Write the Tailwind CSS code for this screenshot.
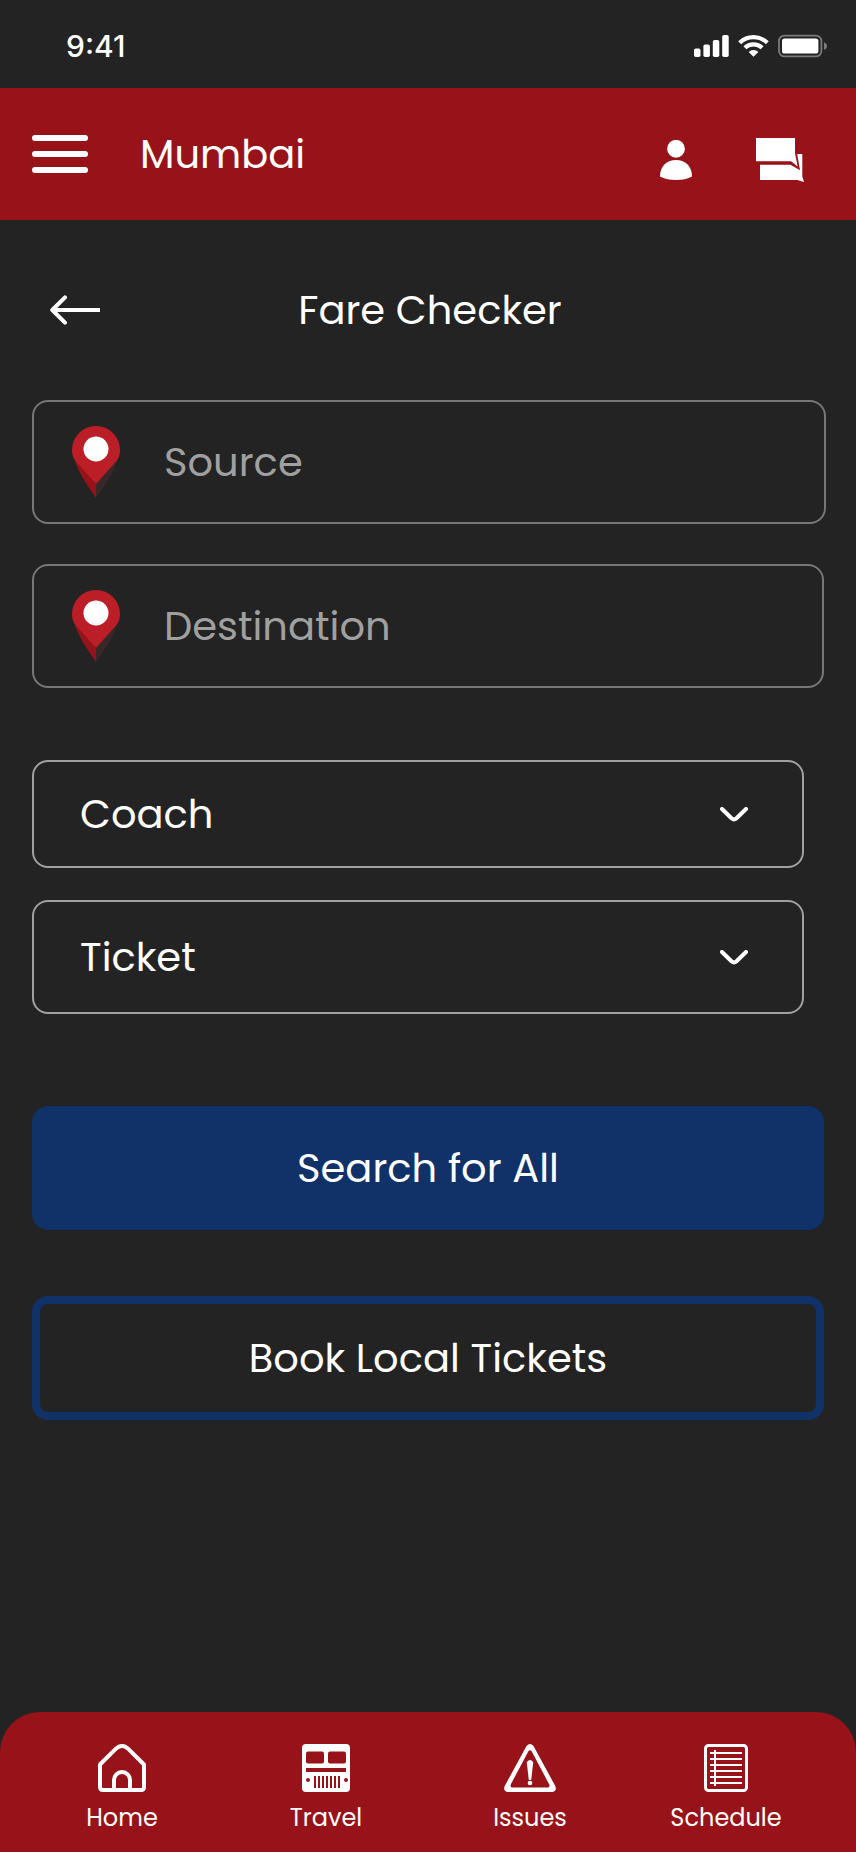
<!DOCTYPE html>
<html lang="en">
<head>
<meta charset="utf-8">
<meta name="viewport" content="width=device-width, initial-scale=1">
<title>Fare Checker</title>
<script src="https://cdn.jsdelivr.net/npm/@tailwindcss/browser@4"></script>
</head>
<body class="flex min-h-screen flex-col bg-[#232323] font-[Poppins,Inter,sans-serif] text-[40px] leading-[60px] text-white">

  <!-- Status bar -->
  <div class="flex h-[88px] items-center justify-between pl-[66px] pr-7 pt-1">
    <time class="font-[Inter,sans-serif] text-[30px] font-medium leading-9">9:41</time>
    <div class="flex items-center gap-[9px]">
      <svg class="h-6 w-[35px]" viewBox="0 0 35 24" fill="#fff" aria-label="Signal">
        <rect x="0" y="14.5" width="6.5" height="8.5" rx="1.8"/><rect x="9.4" y="10.5" width="6.5" height="12.5" rx="1.8"/><rect x="18.8" y="6" width="6.5" height="17" rx="1.8"/><rect x="28.2" y="1" width="6.5" height="22" rx="1.8"/>
      </svg>
      <svg class="h-6 w-[31px]" viewBox="0 0 31 24" aria-label="Wi-Fi">
        <g fill="none" stroke="#fff" stroke-width="4.2"><path d="M1.7 8.8a19.6 19.6 0 0 1 27.6 0"/><path d="M6.9 13.8a12.3 12.3 0 0 1 17.2 0"/></g>
        <path d="M15.5 22.8 10.6 18a7 7 0 0 1 9.8 0Z" fill="#fff"/>
      </svg>
      <svg class="h-6 w-[50px]" viewBox="0 0 50 24" aria-label="Battery">
        <rect x="1" y="1.6" width="42.4" height="20.8" rx="5.5" fill="none" stroke="#7b7b7b" stroke-width="1.8"/>
        <rect x="4" y="4.4" width="36.4" height="15.2" rx="2.6" fill="#fff"/>
        <path d="M46 8.2c4 1.5 4 6.100 0 7.600Z" fill="#7b7b7b"/>
      </svg>
    </div>
  </div>

  <!-- App bar -->
  <header class="flex h-[132px] items-center bg-[#981319] pl-8 pr-[52px]">
    <button type="button" aria-label="Menu" class="mr-[52px]">
      <svg class="h-[38px] w-14" viewBox="0 0 56 38" fill="#fff"><rect width="56" height="6" rx="3"/><rect y="16" width="56" height="6" rx="3"/><rect y="32" width="56" height="6" rx="3"/></svg>
    </button>
    <span class="flex-1">Mumbai</span>
    <div class="flex items-center gap-16 pt-3">
      <button type="button" aria-label="Profile">
        <svg class="h-10 w-8" viewBox="0 0 32 40" fill="#fff"><circle cx="16" cy="8.800" r="8.900"/><path d="M0 36.500C0 26 7 20 16 20s16 6 16 16.500C28 39 22 40 16 40S4 39 0 36.500Z"/></svg>
      </button>
      <button type="button" aria-label="Messages">
        <svg class="h-11 w-12" viewBox="0 0 48 44" fill="#fff"><path d="M0 0h39v15.300l2.700 13.200-6.700-5.300H0Z"/><path d="M4 26.700h30.500L44 32.200 41.200 16h5.100v22.500L48 44l-6.700-2H4Z"/></svg>
      </button>
    </div>
  </header>

  <main class="flex-1 px-8 pt-[60px]">
    <div class="grid grid-cols-[68px_1fr_64px] items-center">
      <button type="button" aria-label="Back" class="pl-[18px]">
        <svg class="h-[30px] w-[50px]" viewBox="0 0 50 30" fill="none" stroke="#fff" stroke-width="4" stroke-linejoin="round"><path d="M2.500 15H50"/><path d="M15 2.300 2.300 15 15 27.700" stroke-linecap="round"/></svg>
      </button>
      <h1 class="text-center">Fare Checker</h1>
    </div>

    <form>
      <div class="-mr-0.5 mt-[60px] flex h-[124px] items-center rounded-2xl border-2 border-[#777777] pl-[38px]">
        <label for="source" aria-label="Source">
          <svg class="h-[72px] w-12" viewBox="0 0 48 72"><path d="M24 58 46 32C42 46 33 59 24 72Z" fill="#382829"/><path d="M24 58 2 32C6 46 15 59 24 72Z" fill="#981319"/><path d="M24 0A24 24 0 0 1 48 24C48 28 47 32 44.500 35L24 58 3.500 35C1 32 0 28 0 24A24 24 0 0 1 24 0Z" fill="#bb1e26"/><circle cx="24" cy="23" r="12.500" fill="#fff"/></svg>
        </label>
        <input id="source" type="text" placeholder="Source" class="ml-11 min-w-0 flex-1 bg-transparent outline-none placeholder:text-[#a0a0a0]">
      </div>
      <div class="mt-10 flex h-[124px] items-center rounded-2xl border-2 border-[#777777] pl-[38px]">
        <label for="destination" aria-label="Destination">
          <svg class="h-[72px] w-12" viewBox="0 0 48 72"><path d="M24 58 46 32C42 46 33 59 24 72Z" fill="#382829"/><path d="M24 58 2 32C6 46 15 59 24 72Z" fill="#981319"/><path d="M24 0A24 24 0 0 1 48 24C48 28 47 32 44.500 35L24 58 3.500 35C1 32 0 28 0 24A24 24 0 0 1 24 0Z" fill="#bb1e26"/><circle cx="24" cy="23" r="12.500" fill="#fff"/></svg>
        </label>
        <input id="destination" type="text" placeholder="Destination" class="ml-11 min-w-0 flex-1 bg-transparent outline-none placeholder:text-[#a0a0a0]">
      </div>

      <div class="mr-5 mt-[72px] grid items-center">
        <select aria-label="Coach" class="col-start-1 row-start-1 h-[108px] w-full appearance-none rounded-2xl border-2 border-[#a0a0a0] bg-transparent pl-[46px] pr-24"><option>Coach</option></select>
        <svg class="pointer-events-none col-start-1 row-start-1 mr-14 h-[15px] w-7 justify-self-end" viewBox="0 0 28 15" fill="none" stroke="#fff" stroke-width="4" stroke-linecap="round" stroke-linejoin="round"><path d="m2 2 9.500 9.200q2.500 2.200 5 0L26 2"/></svg>
      </div>
      <div class="mr-5 mt-8 grid items-center">
        <select aria-label="Ticket" class="col-start-1 row-start-1 h-[114px] w-full appearance-none rounded-2xl border-2 border-[#a0a0a0] bg-transparent pl-[46px] pr-24"><option>Ticket</option></select>
        <svg class="pointer-events-none col-start-1 row-start-1 mr-14 h-[15px] w-7 justify-self-end" viewBox="0 0 28 15" fill="none" stroke="#fff" stroke-width="4" stroke-linecap="round" stroke-linejoin="round"><path d="m2 2 9.500 9.200q2.500 2.200 5 0L26 2"/></svg>
      </div>

      <button type="button" class="mt-[92px] block h-[124px] w-full rounded-2xl bg-[#103269]">Search for All</button>
      <button type="button" class="mt-[66px] block h-[124px] w-full rounded-2xl border-8 border-[#103269]">Book Local Tickets</button>
    </form>
  </main>

  <!-- Tab bar -->
  <nav class="grid h-[140px] grid-cols-[204fr_204fr_204fr_188fr] rounded-t-[40px] bg-[#981319] pl-5 pr-9 pt-8 text-[24px] leading-9">
    <a href="#home" class="flex flex-col items-center gap-2">
      <svg class="h-12 w-12" viewBox="0 0 48 48" fill="none" stroke="#fff" stroke-width="4" stroke-linejoin="round"><path d="M2 20.500 18.500 4.200q5.500-4.400 11 0L46 20.500V43q0 3-3 3H5q-3 0-3-3Z"/><path d="M16 46V36a8 8 0 0 1 16 0v10"/></svg>
      Home
    </a>
    <a href="#travel" class="flex flex-col items-center gap-2">
      <svg class="h-12 w-12" viewBox="0 0 48 48"><rect width="48" height="48" rx="4" fill="#fff"/><g fill="#981319"><rect x="4" y="7.500" width="18" height="12" rx="2"/><rect x="26" y="7.500" width="18" height="12" rx="2"/><path d="M4 24h40v4H4Z"/><circle cx="6" cy="36" r="2"/><circle cx="44" cy="36" r="2"/><path d="M12 32h2v12h-2ZM16 32h2v12h-2ZM20 32h2v12h-2ZM24 32h2v12h-2ZM28 32h2v12h-2ZM32 32h2v12h-2ZM36 32h2v12h-2Z"/></g></svg>
      Travel
    </a>
    <a href="#issues" class="flex flex-col items-center gap-2">
      <svg class="h-12 w-[52px]" viewBox="0 0 52 48" fill="#fff"><path fill-rule="evenodd" d="M22.500 2Q26-2 29.500 2L51 41.500Q53.500 46.500 48.500 48H3.500Q-1.500 46.500 1 41.500ZM24.500 7 7 40Q5.500 43.500 8.500 43.500H43.500Q46.500 43.500 45 40L27.500 7Q26 5.500 24.500 7Z"/><path d="M22.800 18.500Q23.500 16 26 16t3.200 2.500L27.200 36h-2.400Z"/><circle cx="26" cy="39" r="2.300"/></svg>
      Issues
    </a>
    <a href="#schedule" class="flex flex-col items-center gap-2">
      <svg class="h-12 w-11" viewBox="0 0 44 48" fill="none" stroke="#fff" stroke-width="2"><rect x="1.500" y="1.500" width="41" height="45" rx="3" stroke-width="3"/><path d="M6 9h32M6 15h32M6 21h32M6 27h32M6 33h32M6 39h32M11 6v36"/></svg>
      Schedule
    </a>
  </nav>
</body>
</html>
